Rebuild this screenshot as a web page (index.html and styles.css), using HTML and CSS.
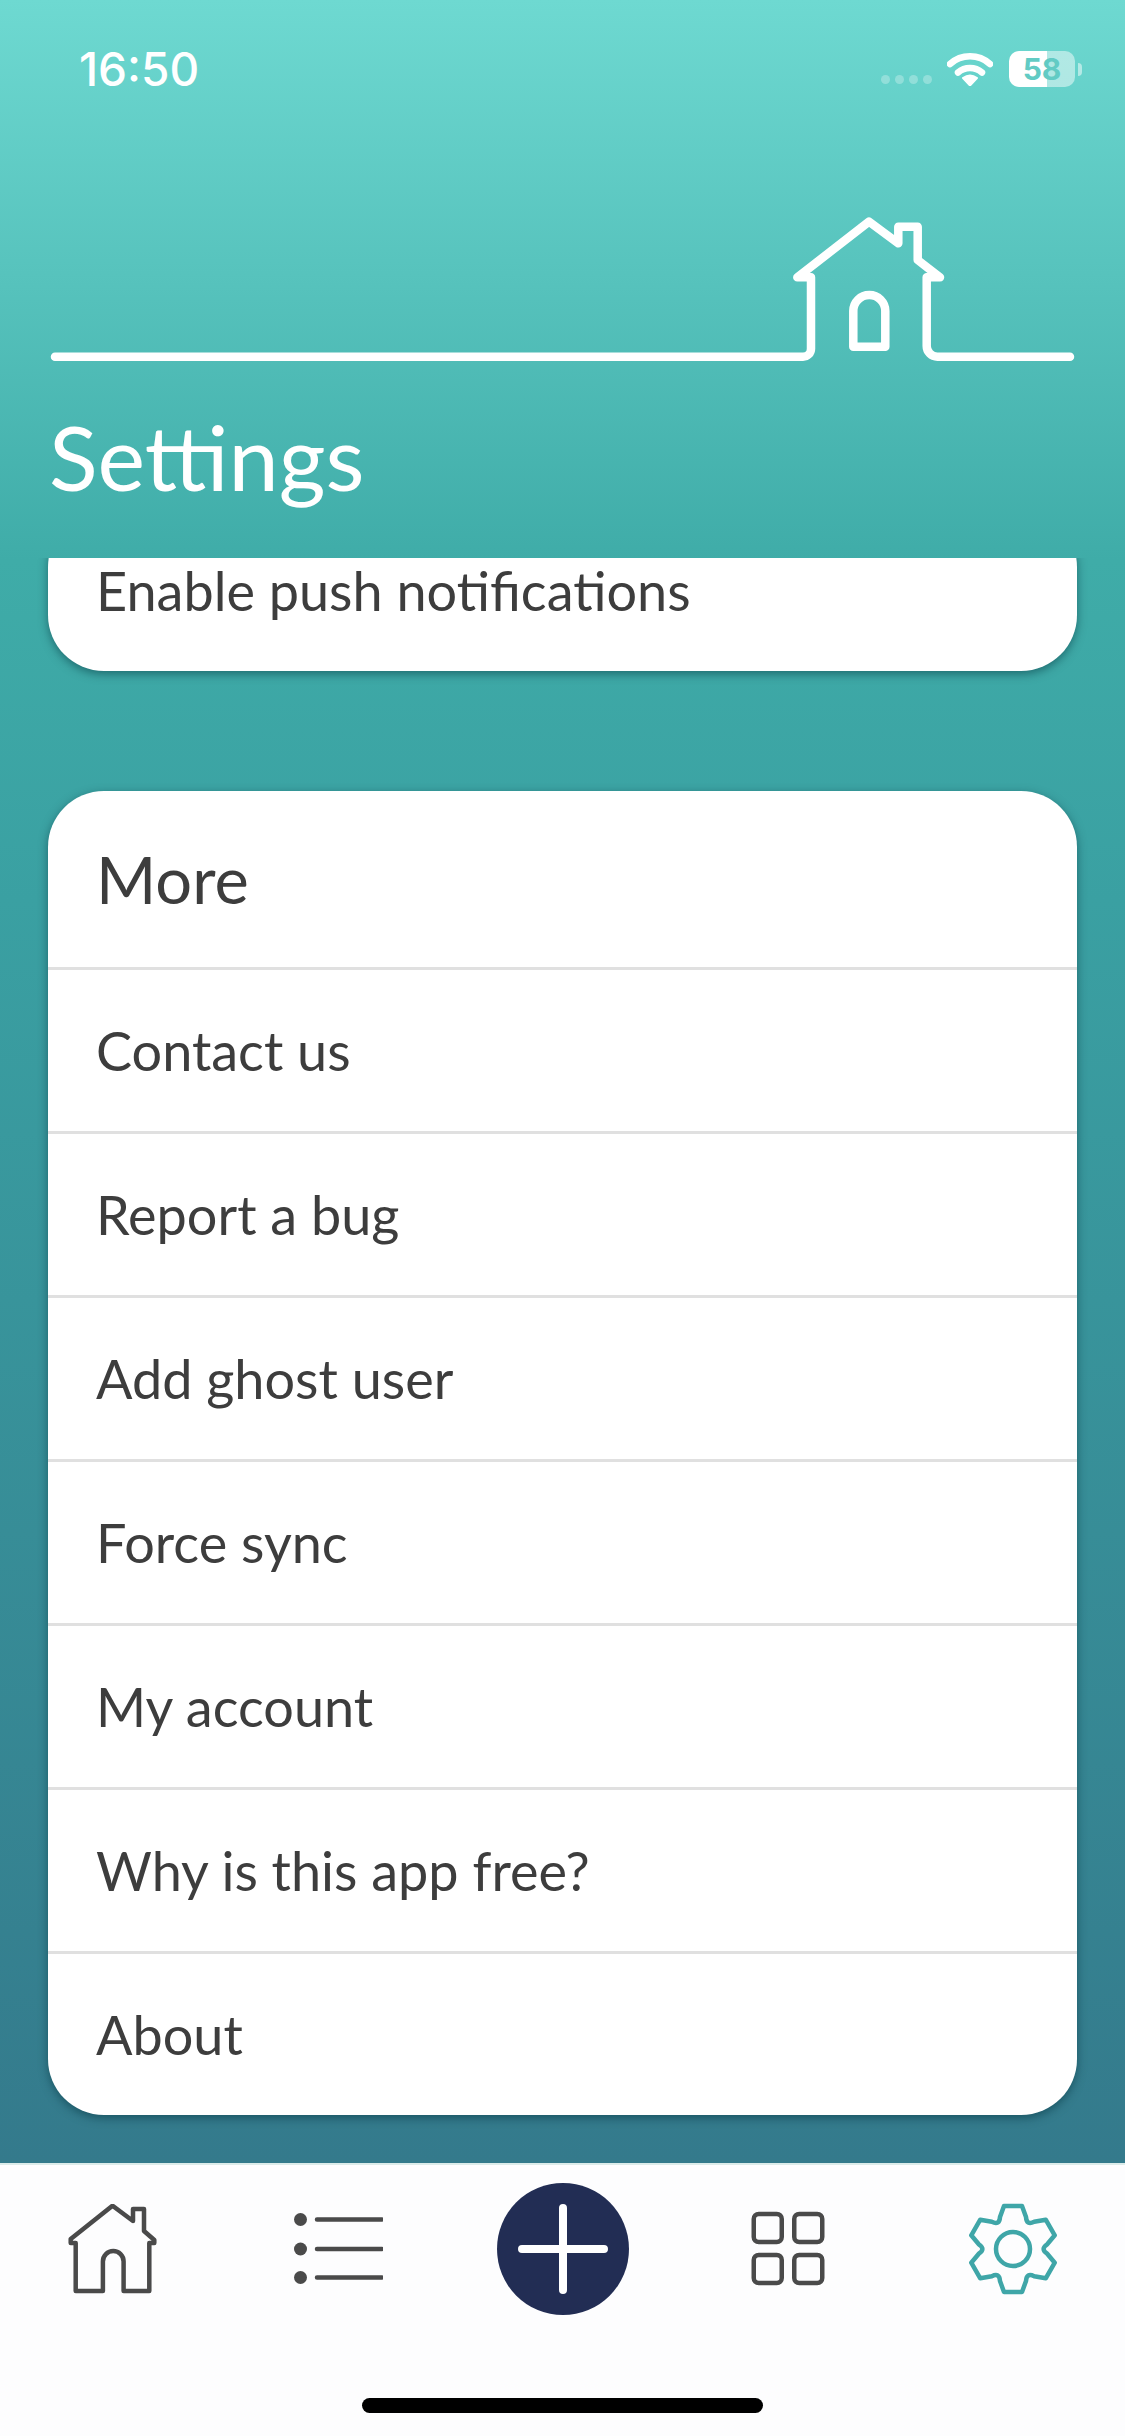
FILE: index.html
```html
<!DOCTYPE html>
<html lang="en">
<head>
<meta charset="utf-8">
<title>Settings</title>
<link rel="stylesheet" href="styles.css">
</head>
<body>
<div class="screen">
  <header class="header">
    <div class="status">
      <span class="time">16:50</span>
      <div class="status-icons">
        <div class="signal"><i></i><i></i><i></i><i></i></div>
        <svg class="wifi" viewBox="0 0 46 33" width="46" height="33"><path class="wifi-arc" d="M3 11A30 30 0 0 1 43 11"/><path class="wifi-arc" d="M11 19.500A18 18 0 0 1 35 19.500"/><path class="wifi-dot" d="M16 25Q23 20 30 25L23 32.500Z"/></svg>
        <div class="battery"><span>58</span></div>
        <div class="nub"></div>
      </div>
    </div>
    <svg class="logo" viewBox="0 190 1125 180" width="1125" height="180">
      <path d="M55 356.700H803a8 8 0 0 0 8-8V277.300H797.300L869 221.700L898.300 243.300V226.700H917.700V260L940 277.300H926.700V346a10.700 10.700 0 0 0 10.700 10.700H1070"/>
      <path d="M853.300 346.700V311a16 16 0 0 1 32 0V346.700Z"/>
    </svg>
    <h1 class="title">Settings</h1>
  </header>
  <main class="scroll">
    <section class="card card-clipped">
      <div class="row">Enable push notifications</div>
    </section>
    <section class="card">
      <div class="row row-head">More</div>
      <div class="row">Contact us</div>
      <div class="row">Report a bug</div>
      <div class="row">Add ghost user</div>
      <div class="row">Force sync</div>
      <div class="row">My account</div>
      <div class="row">Why is this app free?</div>
      <div class="row">About</div>
    </section>
  </main>
  <nav class="tabs">
    <div class="tab">
      <svg class="icon" viewBox="0 0 90 90" width="90" height="90"><path d="M34.900 87V57.400a10.350 10.350 0 0 1 20.700 0V87H81.300V39H86.300V36L76 27V5H65V17L44.500 1.700L2.700 35V39H7.700V87Z"/></svg>
    </div>
    <div class="tab">
      <svg class="icon" viewBox="0 0 90 90" width="90" height="90"><circle class="solid" cx="7.500" cy="15.500" r="6.500"/><circle class="solid" cx="7.500" cy="45" r="6.500"/><circle class="solid" cx="7.500" cy="73.500" r="6.500"/><path d="M24 15.500H89M24 45H89M24 73.500H89"/></svg>
    </div>
    <div class="tab">
      <div class="add"><svg class="plus" viewBox="0 0 90 90" width="90" height="90"><path d="M4 45H86M45 4V86"/></svg></div>
    </div>
    <div class="tab">
      <svg class="icon" viewBox="0 0 90 90" width="90" height="90"><rect x="10.750" y="10" width="28" height="28" rx="5"/><rect x="51.250" y="10" width="28" height="28" rx="5"/><rect x="10.750" y="51" width="28" height="28" rx="5"/><rect x="51.250" y="51" width="28" height="28" rx="5"/></svg>
    </div>
    <div class="tab tab-active">
      <svg class="icon gear" viewBox="-48 -48 96 96" width="96" height="96"><circle cx="0" cy="0" r="17"/><path d="M-13-32L-9-43H9L13-32Q13.500-23.400 21.200-27.260L32.740-29.290L41.740-13.710L34.200-4.740Q27 0 34.200 4.740L41.740 13.710L32.740 29.290L21.200 27.260Q13.500 23.400 13 32L9 43H-9L-13 32Q-13.500 23.400-21.200 27.260L-32.740 29.290L-41.740 13.710L-34.200 4.740Q-27 0-34.200-4.740L-41.740-13.710L-32.740-29.290L-21.200-27.260Q-13.500-23.400-13-32Z"/></svg>
    </div>
    <div class="home-bar"></div>
  </nav>
</div>
</body>
</html>
```
FILE: styles.css
```css
* { box-sizing: border-box; }
html, body { margin: 0; padding: 0; }
body { width: 1125px; height: 2436px; overflow: hidden; font-family: "Lato", "Liberation Sans", sans-serif; }

.screen {
  width: 1125px;
  height: 2436px;
  display: flex;
  flex-direction: column;
  background: linear-gradient(180deg, #6ed9d1 0, #3faca8 560px, #3aa0a2 900px, #347a8c 2163px);
}

.header { height: 558px; flex: none; }

.status {
  height: 140px;
  padding: 45px 43px 0 79px;
  display: flex;
  justify-content: space-between;
  align-items: flex-start;
  color: #fff;
}
.time { font-family: "Inter", "Liberation Sans", sans-serif; font-size: 46px; font-weight: 500; line-height: 48px; }
.status-icons { display: flex; align-items: flex-start; padding-top: 6px; }
.signal { display: flex; gap: 5px; margin: 24px 15px 0 0; }
.signal i { width: 9px; height: 9px; border-radius: 50%; background: rgba(255, 255, 255, .28); }
.wifi { margin: 2px 16px 0 0; }
.wifi-arc { fill: none; stroke: #fff; stroke-width: 6.500; stroke-linecap: round; }
.wifi-dot { fill: #fff; stroke: #fff; stroke-width: 2; stroke-linejoin: round; }
.battery {
  width: 66px;
  height: 36px;
  border-radius: 10px;
  background: linear-gradient(90deg, #fff 0, #fff 58%, rgba(255, 255, 255, .48) 58%);
  display: flex;
  align-items: center;
  justify-content: center;
}
.battery span { font-family: "Inter", "Liberation Sans", sans-serif; font-size: 30px; font-weight: 700; line-height: 36px; color: #62cbc4; }
.nub { width: 4px; height: 13px; margin: 12px 0 0 3px; border-radius: 0 4px 4px 0; background: rgba(255, 255, 255, .5); }

.logo { display: block; margin-top: 50px; fill: none; stroke: #fff; stroke-width: 8.500; stroke-linecap: round; stroke-linejoin: round; }
.title { margin: 36px 0 0 49px; font-size: 90px; font-weight: 400; line-height: 100px; color: #fff; }

.scroll { flex: 1; min-height: 0; overflow: hidden; padding: 0 48px; display: flex; flex-direction: column; gap: 120px; }

.card { flex: none; background: #fff; border-radius: 56px; box-shadow: 0 3px 10px rgba(0, 45, 55, .5); overflow: hidden; }
.card-clipped { margin-top: -47px; }

.row {
  height: 164px;
  padding-left: 48px;
  display: flex;
  align-items: center;
  font-size: 54px;
  color: #3d3d3d;
  border-top: 3px solid #e0e0e0;
}
.row:first-child { border-top: 0; }
.card-clipped .row { height: 160px; padding-bottom: 2px; }
.row-head { height: 176px; font-size: 65px; }

.tabs {
  height: 273px;
  flex: none;
  position: relative;
  display: grid;
  grid-template-columns: repeat(5, 225px);
  align-items: start;
  padding-top: 18px;
  background: #fdfdfe;
  border-top: 2px solid #dcecea;
}
.tab { display: flex; justify-content: center; height: 132px; align-items: center; }
.icon { fill: none; stroke: #4a4a4a; stroke-width: 4.500; stroke-linecap: round; stroke-linejoin: round; }
.solid { fill: #4a4a4a; stroke: none; }
.gear { stroke: #3fa6a8; }
.add { width: 132px; height: 132px; border-radius: 50%; background: #222d54; display: flex; align-items: center; justify-content: center; }
.plus { fill: none; stroke: #fff; stroke-width: 8; stroke-linecap: round; }
.home-bar { position: absolute; left: 362px; bottom: 23px; width: 401px; height: 15px; border-radius: 8px; background: #000; }
```
